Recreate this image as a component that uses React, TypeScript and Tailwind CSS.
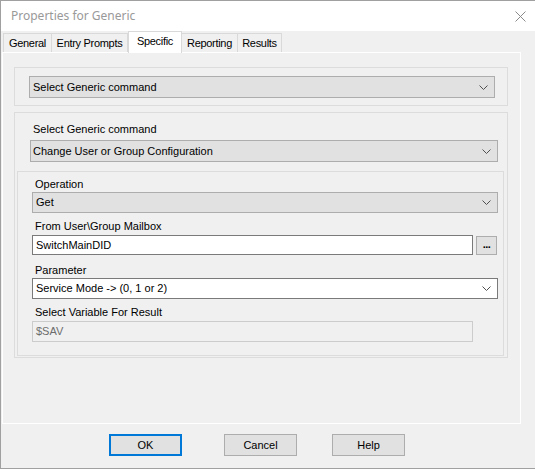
import React from 'react';

const Chevron = () => (
  <svg width="9" height="5" viewBox="0 0 9 5" className="shrink-0">
    <path d="M0.5 0.5 L4.5 4.5 L8.5 0.5" fill="none" stroke="#505050" strokeWidth="1" />
  </svg>
);

const Combo: React.FC<{ text: string; white?: boolean; className?: string }> = ({ text, white, className }) => (
  <div
    className={
      'flex items-center justify-between pr-[6px] ' +
      (white ? 'bg-white border border-[#7a7a7a] ' : 'bg-[#e1e1e1] border border-[#adadad] ') +
      (className || '')
    }
  >
    <span className="leading-[13px]">{text}</span>
    <Chevron />
  </div>
);

const Label: React.FC<{ text: string; className?: string }> = ({ text, className }) => (
  <div className={'h-[13px] leading-[13px] pl-[3px] ' + (className || '')}>{text}</div>
);

const tabs = [
  { name: 'General', w: 'w-[49px]' },
  { name: 'Entry Prompts', w: 'w-[76px]' },
  { name: 'Specific', w: 'w-[54px]', active: true },
  { name: 'Reporting', w: 'w-[56px]' },
  { name: 'Results', w: 'w-[44px]' },
];

export default function App() {
  return (
    <div
      className="w-[535px] h-[469px] bg-[#f0f0f0] border-l border-t border-b border-[#a0a0a0] flex flex-col text-[11px] text-black overflow-hidden"
      style={{ fontFamily: '"Liberation Sans", Arial, sans-serif' }}
    >
      {/* title bar */}
      <div className="h-[30px] bg-white flex items-center justify-between pl-[10px] pr-[9px] shrink-0">
        <span className="text-[12px] text-[#999999]" style={{ fontFamily: '"Noto Sans", "Open Sans", sans-serif' }}>
          Properties for Generic
        </span>
        <svg width="11" height="11" viewBox="0 0 11 11">
          <path d="M0.5 0.5 L10.5 10.5 M10.5 0.5 L0.5 10.5" stroke="#8a8a8a" strokeWidth="1" />
        </svg>
      </div>

      {/* tabs */}
      <div className="h-[21px] flex items-end pl-[2px] shrink-0 relative z-10 tracking-[-0.3px]">
        {tabs.map((t) =>
          t.active ? (
            <div
              key={t.name}
              className={`${t.w} h-[22px] -mb-[1px] bg-white border-t border-l border-r border-[#d9d9d9] flex items-center justify-center pb-[2px]`}
            >
              {t.name}
            </div>
          ) : (
            <div
              key={t.name}
              className={`${t.w} h-[19px] bg-[#f0f0f0] border-t border-r border-[#d9d9d9] first:border-l flex items-center justify-center`}
            >
              {t.name}
            </div>
          )
        )}
      </div>

      {/* tab panel */}
      <div className="ml-[1px] w-[519px] h-[372px] border border-white bg-[#f0f0f0] shrink-0">
        {/* group 1 */}
        <div className="ml-[11px] mt-[14px] w-[494px] h-[39px] border border-[#dcdcdc] pt-[8px] pl-[14px]">
          <Combo text="Select Generic command" className="w-[466px] h-[22px] pl-[3px]" />
        </div>

        {/* group 2 */}
        <div className="ml-[11px] mt-[6px] w-[494px] h-[246px] border border-[#dcdcdc] pt-[10px]">
          <div className="h-[13px] leading-[13px] pl-[18px]">Select Generic command</div>
          <Combo text="Change User or Group Configuration" className="ml-[15px] mt-[4px] w-[468px] h-[22px] pl-[2px]" />

          {/* group 3 */}
          <div className="ml-[2px] mt-[9px] w-[487px] h-[185px] border border-[#dcdcdc] pt-[6px] pl-[14px]">
            <Label text="Operation" />
            <Combo text="Get" className="mt-[1px] w-[466px] h-[21px] pl-[3px]" />

            <Label text="From User\Group Mailbox" className="mt-[7px]" />
            <div className="mt-[2px] flex items-start">
              <div className="w-[441px] h-[20px] bg-white border border-[#7a7a7a] flex items-center pl-[3px]">
                <span className="leading-[13px]">SwitchMainDID</span>
              </div>
              <div className="ml-[3px] mt-[1px] w-[21px] h-[19px] bg-[#e1e1e1] border border-[#adadad] flex items-center justify-center">
                <span className="text-[11px] font-bold leading-[8px] tracking-[-0.5px] pb-[3px]">...</span>
              </div>
            </div>

            <Label text="Parameter" className="mt-[9px]" />
            <Combo text="Service Mode -> (0, 1 or 2)" white className="mt-[1px] w-[466px] h-[21px] pl-[3px]" />

            <Label text="Select Variable For Result" className="mt-[7px]" />
            <div className="mt-[2px] w-[441px] h-[21px] bg-[#f0f0f0] border border-[#cccccc] flex items-center pl-[3px]">
              <span className="leading-[13px] text-[#6d6d6d]">$SAV</span>
            </div>
          </div>
        </div>
      </div>

      {/* buttons */}
      <div className="mt-[10px] flex pl-[108px]">
        <button className="w-[73px] h-[22px] bg-[#e1e1e1] border-2 border-[#0078d7] flex items-center justify-center">
          OK
        </button>
        <button className="ml-[42px] w-[73px] h-[22px] bg-[#e1e1e1] border border-[#adadad] flex items-center justify-center">
          Cancel
        </button>
        <button className="ml-[35px] w-[73px] h-[22px] bg-[#e1e1e1] border border-[#adadad] flex items-center justify-center">
          Help
        </button>
      </div>
    </div>
  );
}
